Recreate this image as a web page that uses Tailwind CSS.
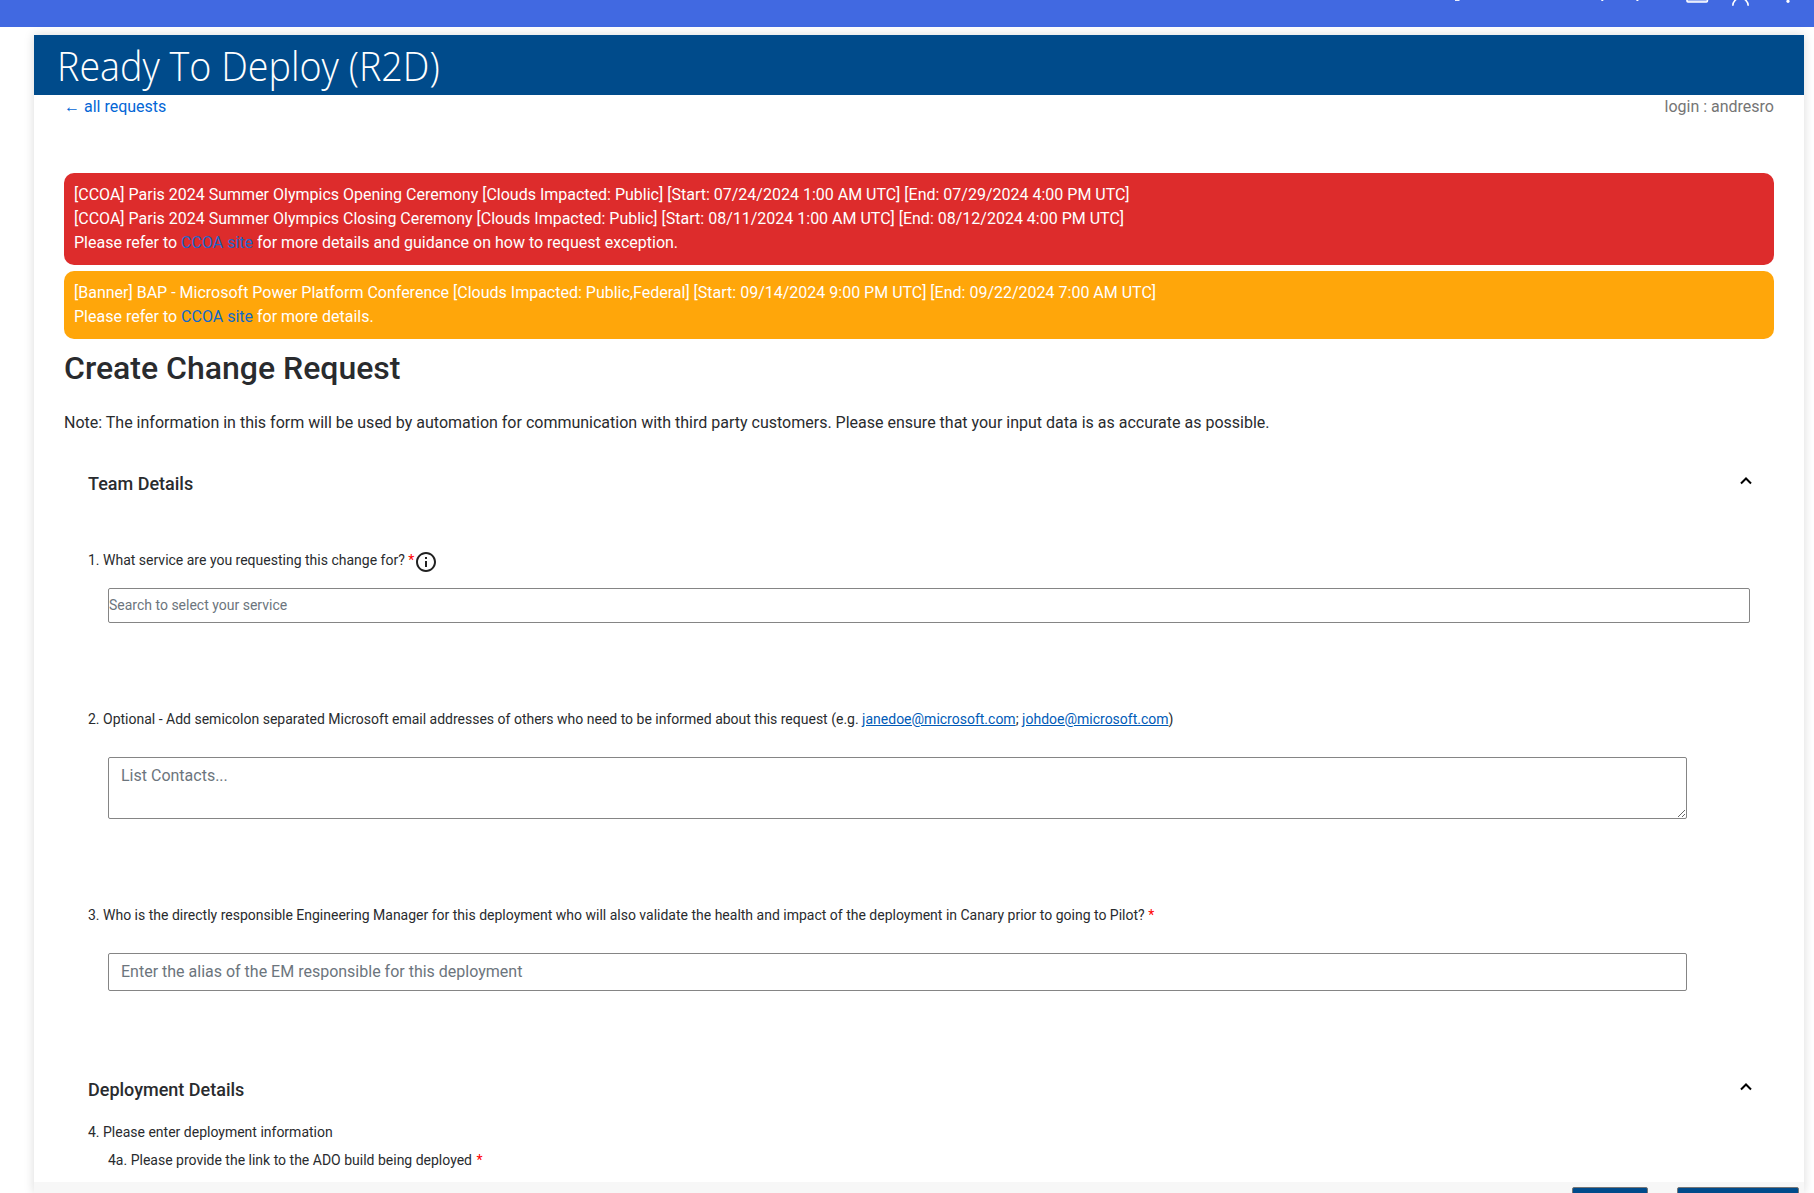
<!DOCTYPE html>
<html lang="en">
<head>
<meta charset="utf-8">
<title>Ready To Deploy (R2D)</title>
<script src="https://cdn.jsdelivr.net/npm/@tailwindcss/browser@4"></script>
</head>
<body class="h-[1193px] overflow-hidden bg-white font-['Roboto',sans-serif] text-base text-[#292b2e]">
<div class="flex h-[1193px] flex-col overflow-hidden">
  <header class="h-[27px] shrink-0 bg-[#4169e1]">
    <svg class="block h-[27px] w-full" viewBox="0 0 1814 27" fill="none" stroke="#fff" stroke-width="1.6">
      <path d="M1455 0.3h4.5" stroke-width="1.2"/>
      <path d="M1602.3 0v1M1637.4 0v1" stroke-width="2"/>
      <rect x="1687" y="-12" width="20.400" height="14" rx="1" fill="#fff" fill-opacity=".5"/>
      <path d="M1732.800 5.800c.3-10 15-10 15.400 0"/>
      <circle cx="1788" cy="1.300" r="1.600" fill="#fff" stroke="none"/>
    </svg>
  </header>
  <main class="relative mt-2 mr-[10px] ml-[34px] flex min-h-0 flex-1 flex-col bg-white shadow-[0_0_10px_rgba(0,0,0,0.15)]">
    <div class="flex h-[60px] shrink-0 items-center bg-[#004b8b] px-[23px]">
      <h1 class="origin-left scale-x-[0.942] pt-[2px] font-['Open_Sans',sans-serif] text-[40px] leading-[60px] font-light whitespace-nowrap text-white">Ready To Deploy (R2D)</h1>
    </div>
    <div class="flex min-h-0 flex-1 flex-col overflow-hidden px-[30px]">
      <div class="flex h-6 shrink-0 items-center justify-between">
        <a class="text-[#0366d6]">← all requests</a>
        <span class="text-[#757575]">login : andresro</span>
      </div>
      <div class="mt-[54px] shrink-0 rounded-[10px] bg-[#dd2c2c] p-[10px] leading-6 text-white">
        <p>[CCOA] Paris 2024 Summer Olympics Opening Ceremony [Clouds Impacted: Public] [Start: 07/24/2024 1:00 AM UTC] [End: 07/29/2024 4:00 PM UTC]</p>
        <p>[CCOA] Paris 2024 Summer Olympics Closing Ceremony [Clouds Impacted: Public] [Start: 08/11/2024 1:00 AM UTC] [End: 08/12/2024 4:00 PM UTC]</p>
        <p>Please refer to <a class="text-[#1c66c8]">CCOA site</a> for more details and guidance on how to request exception.</p>
      </div>
      <div class="mt-[6px] shrink-0 rounded-[10px] bg-[#ffa60a] p-[10px] leading-6 text-white">
        <p>[Banner] BAP - Microsoft Power Platform Conference [Clouds Impacted: Public,Federal] [Start: 09/14/2024 9:00 PM UTC] [End: 09/22/2024 7:00 AM UTC]</p>
        <p>Please refer to <a class="text-[#0f69cb]">CCOA site</a> for more details.</p>
      </div>
      <h2 class="mt-[10px] shrink-0 text-[32px] leading-[38px] font-medium">Create Change Request</h2>
      <p class="mt-[24px] shrink-0 leading-6">Note: The information in this form will be used by automation for communication with third party customers. Please ensure that your input data is as accurate as possible.</p>

      <section class="mt-[37px] shrink-0 px-6 text-sm">
        <div class="flex h-6 items-center justify-between">
          <h3 class="text-lg leading-6 font-medium">Team Details</h3>
          <svg class="mr-[-2px] mb-[6px] size-3" viewBox="0 0 12 12" fill="none" stroke="#000" stroke-width="2"><path d="M1 8.500 6 3.500 11 8.500"/></svg>
        </div>
        <div class="mt-[52px] flex h-6 items-center">
          <span>1. What service are you requesting this change for? <span class="text-[#ff0000]">*</span></span>
          <svg class="mt-1 size-6" viewBox="0 0 24 24" fill="#212121"><path d="M11 7h2v2h-2zm0 4h2v6h-2zm1-9C6.480 2 2 6.480 2 12s4.480 10 10 10 10-4.480 10-10S17.520 2 12 2zm0 18c-4.410 0-8-3.590-8-8s3.590-8 8-8 8 3.590 8 8-3.590 8-8 8z"/></svg>
        </div>
        <input class="mt-4 ml-5 block h-[35px] w-[1642px] rounded-[2px] border border-[#858585] pb-[2px] placeholder:text-[#6c757d]" placeholder="Search to select your service">
        <p class="mt-[85px] leading-[22px]">2. Optional - Add semicolon separated Microsoft email addresses of others who need to be informed about this request (e.g. <a class="text-[#005bb8] underline">janedoe@microsoft.com</a>; <a class="text-[#005bb8] underline">johdoe@microsoft.com</a>)</p>
        <textarea class="mt-[27px] ml-5 block h-[62px] w-[1579px] resize rounded-[2px] border border-[#858585] px-3 py-[6px] text-base leading-6 placeholder:text-[#6c757d]" placeholder="List Contacts..."></textarea>
        <p class="mt-[85px] leading-[22px]">3. Who is the directly responsible Engineering Manager for this deployment who will also validate the health and impact of the deployment in Canary prior to going to Pilot? <span class="text-[#ff0000]">*</span></p>
        <input class="mt-[27px] ml-5 block h-[38px] w-[1579px] rounded-[2px] border border-[#858585] px-3 pb-[2px] text-base placeholder:text-[#6c757d]" placeholder="Enter the alias of the EM responsible for this deployment">
      </section>

      <section class="mt-[87px] shrink-0 px-6 text-sm">
        <div class="flex h-6 items-center justify-between">
          <h3 class="text-lg leading-6 font-medium">Deployment Details</h3>
          <svg class="mr-[-2px] mb-[6px] size-3" viewBox="0 0 12 12" fill="none" stroke="#000" stroke-width="2"><path d="M1 8.500 6 3.500 11 8.500"/></svg>
        </div>
        <p class="mt-[18px] leading-[24px]">4. Please enter deployment information</p>
        <p class="mt-1 ml-5 leading-[24px]">4a. Please provide the link to the ADO build being deployed <span class="ml-[1px] text-[#ff0000]">*</span></p>
      </section>
    </div>
    <footer class="flex h-[11px] shrink-0 items-start justify-end gap-[29px] overflow-hidden bg-[#f7f7f7] pt-[5px] pr-[5px]">
      <div class="h-9 w-[76px] rounded-[2px] border border-[#767676] bg-[#004b8b]"></div>
      <div class="h-9 w-[122px] rounded-[2px] border border-[#767676] bg-[#004b8b]"></div>
    </footer>
  </main>
</div>
</body>
</html>
